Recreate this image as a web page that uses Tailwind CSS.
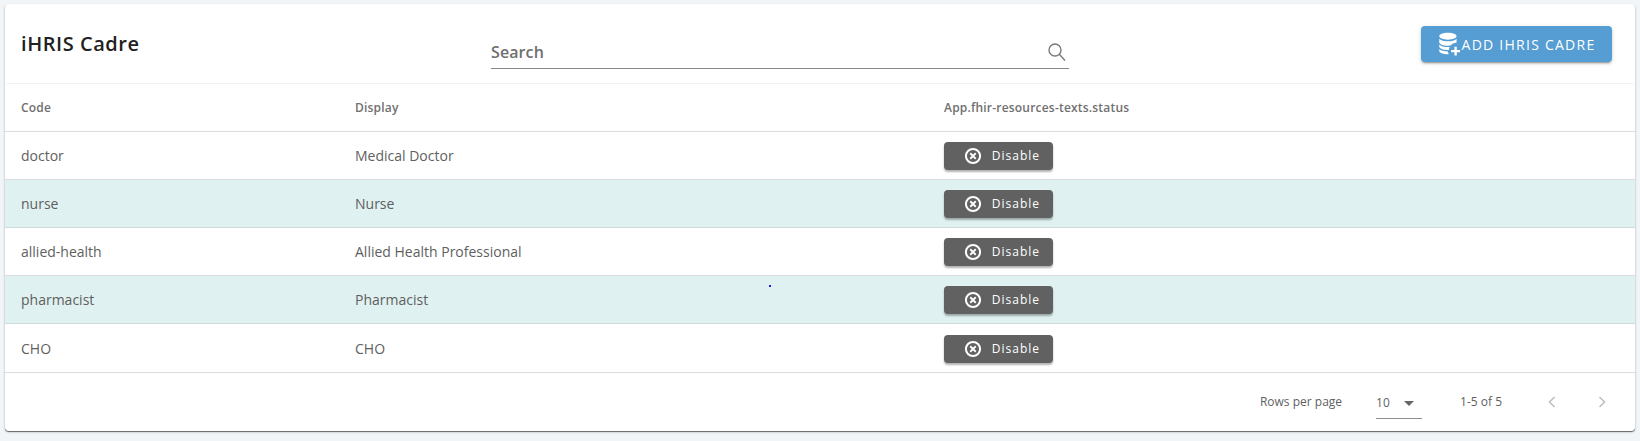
<!DOCTYPE html>
<html><head><meta charset="utf-8"><script src="https://cdn.jsdelivr.net/npm/@tailwindcss/browser@4"></script></head>
<body class="bg-[#f1f5f8] font-['Open_Sans','Noto_Sans',sans-serif] w-[1640px] h-[441px] overflow-hidden">
<div class="pt-1 px-[5px]">
<div class="relative bg-white rounded-[4px] h-[427px] shadow-[0_1px_1px_0_rgba(0,0,0,0.55),0_1px_3px_0_rgba(0,0,0,0.14)]">
  <div class="h-[79px] relative flex items-start">
    <div class="pl-4 pt-[24px] text-[20px] leading-[32px] font-semibold tracking-[0.55px] text-[#212121] w-[486px]">iHRIS Cadre</div>
    <div class="mt-[24px] w-[578px] h-[41px] border-b border-[#8a8a8a] flex items-center justify-between pt-[7px]">
      <span class="text-[16px] font-semibold tracking-[0.1px] text-[#6f6f6f]">Search</span>
      <svg class="w-6 h-6 text-[#7a7a7a]" viewBox="0 0 24 24" fill="none" stroke="currentColor" stroke-width="1.400"><circle cx="10" cy="10" r="6"/><path d="M14.500 14.500l5.500 6"/></svg>
    </div>
    <div class="ml-auto mr-[23px] mt-[22px] w-[191px] h-9 bg-[#559dd2] rounded-[4px] flex items-center justify-center text-white text-[14px] font-medium tracking-[1.25px] shadow-[0_3px_1px_-2px_rgba(0,0,0,0.2),0_2px_2px_0_rgba(0,0,0,0.14),0_1px_5px_0_rgba(0,0,0,0.12)]">
      <svg class="w-[26px] h-[26px] -ml-[2px]" viewBox="0 0 24 24" fill="currentColor"><path d="M11 1.500c4.400 0 8 1.400 8 3.200S15.400 8 11 8 3 6.500 3 4.700 6.600 1.500 11 1.500zM3 7.100C4.600 8.700 7.600 9.500 11 9.500s6.400-.8 8-2.400V10c0 .3-.1.600-.3.900a6.500 6.500 0 0 0-5.400 2.500c-.7.1-1.500.1-2.300.1-4.400 0-8-1.400-8-3.200V7.100zM3 12.400c1.600 1.600 4.600 2.400 8 2.400h1.500a6 6 0 0 0-.5 2.400v.3c-.3 0-.7.100-1 .1-4.400 0-8-1.400-8-3.200v-2zM3 16.900c1.600 1.300 4.400 1.900 8 2 .1.900.4 1.700.8 2.500-.3 0-.5.100-.8.100-4.400 0-8-1.400-8-3.100v-1.500zM17 14.500h2.200v3h3v2.200h-3v3H17v-3h-3v-2.200h3v-3z"/></svg>
      <span>ADD IHRIS CADRE</span>
    </div>
  </div>
  <div class="rounded-t-[4px] border-t border-[#f3f3f3]">
    <div class="grid grid-cols-[350px_589px_1fr] h-[48px] items-center border-b border-[#dcdcdc] text-[12px] font-semibold text-[#707070] tracking-[0.2px]">
      <div class="pl-4">Code</div><div>Display</div><div>App.fhir-resources-texts.status</div>
    </div>
    <div class="grid grid-cols-[350px_589px_1fr] h-[48px] items-center border-b border-[#dcdcdc] text-[14px] text-[#5f5f5f]">
      <div class="pl-4">doctor</div><div>Medical Doctor</div>
      <div><div class="mt-[1px] w-[109px] h-7 bg-[#616161] rounded-[4px] text-white text-[12px] font-medium tracking-[1px] flex items-center justify-end pr-[13px] gap-[9px] shadow-[0_2px_2px_rgba(0,0,0,0.3)]"><svg class="w-5 h-5" viewBox="0 0 24 24" fill="none" stroke="currentColor"><circle cx="12" cy="12" r="8.500" stroke-width="2.400"/><path d="M8.700 8.700l6.600 6.600M15.300 8.700l-6.600 6.600" stroke-width="2.200"/></svg><span>Disable</span></div></div>
    </div>
    <div class="grid grid-cols-[350px_589px_1fr] h-[48px] items-center border-b border-[#cfdcdc] bg-[#dff1f0] text-[14px] text-[#5f5f5f]">
      <div class="pl-4">nurse</div><div>Nurse</div>
      <div><div class="mt-[1px] w-[109px] h-7 bg-[#616161] rounded-[4px] text-white text-[12px] font-medium tracking-[1px] flex items-center justify-end pr-[13px] gap-[9px] shadow-[0_2px_2px_rgba(0,0,0,0.3)]"><svg class="w-5 h-5" viewBox="0 0 24 24" fill="none" stroke="currentColor"><circle cx="12" cy="12" r="8.500" stroke-width="2.400"/><path d="M8.700 8.700l6.600 6.600M15.300 8.700l-6.600 6.600" stroke-width="2.200"/></svg><span>Disable</span></div></div>
    </div>
    <div class="grid grid-cols-[350px_589px_1fr] h-[48px] items-center border-b border-[#dcdcdc] text-[14px] text-[#5f5f5f]">
      <div class="pl-4">allied-health</div><div>Allied Health Professional</div>
      <div><div class="mt-[1px] w-[109px] h-7 bg-[#616161] rounded-[4px] text-white text-[12px] font-medium tracking-[1px] flex items-center justify-end pr-[13px] gap-[9px] shadow-[0_2px_2px_rgba(0,0,0,0.3)]"><svg class="w-5 h-5" viewBox="0 0 24 24" fill="none" stroke="currentColor"><circle cx="12" cy="12" r="8.500" stroke-width="2.400"/><path d="M8.700 8.700l6.600 6.600M15.300 8.700l-6.600 6.600" stroke-width="2.200"/></svg><span>Disable</span></div></div>
    </div>
    <div class="grid grid-cols-[350px_589px_1fr] h-[48px] items-center border-b border-[#cfdcdc] bg-[#dff1f0] text-[14px] text-[#5f5f5f]">
      <div class="pl-4">pharmacist</div><div>Pharmacist</div>
      <div><div class="mt-[1px] w-[109px] h-7 bg-[#616161] rounded-[4px] text-white text-[12px] font-medium tracking-[1px] flex items-center justify-end pr-[13px] gap-[9px] shadow-[0_2px_2px_rgba(0,0,0,0.3)]"><svg class="w-5 h-5" viewBox="0 0 24 24" fill="none" stroke="currentColor"><circle cx="12" cy="12" r="8.500" stroke-width="2.400"/><path d="M8.700 8.700l6.600 6.600M15.300 8.700l-6.600 6.600" stroke-width="2.200"/></svg><span>Disable</span></div></div>
    </div>
    <div class="grid grid-cols-[350px_589px_1fr] h-[49px] items-center border-b border-[#dcdcdc] text-[14px] text-[#5f5f5f]">
      <div class="pl-4">CHO</div><div>CHO</div>
      <div><div class="mt-[1px] w-[109px] h-7 bg-[#616161] rounded-[4px] text-white text-[12px] font-medium tracking-[1px] flex items-center justify-end pr-[13px] gap-[9px] shadow-[0_2px_2px_rgba(0,0,0,0.3)]"><svg class="w-5 h-5" viewBox="0 0 24 24" fill="none" stroke="currentColor"><circle cx="12" cy="12" r="8.500" stroke-width="2.400"/><path d="M8.700 8.700l6.600 6.600M15.300 8.700l-6.600 6.600" stroke-width="2.200"/></svg><span>Disable</span></div></div>
    </div>
    <div class="h-[58px] flex items-start justify-end text-[12px] text-[#5f5f5f] pr-[21px]">
      <span class="mt-[20px]">Rows per page</span>
      <div class="ml-[34px] mt-[6px] w-[46px] h-[40px] border-b border-[#8f8f8f] flex items-center justify-between pt-[9px]"><span>10</span><svg class="w-6 h-6 mr-[1px] text-[#666666]" viewBox="0 0 24 24" fill="currentColor"><path d="M7 10l5 5 5-5z"/></svg></div>
      <span class="ml-[38px] mt-[20px]">1-5 of 5</span>
      <svg class="ml-[38px] mt-[17px] w-6 h-6 text-[#bdbdbd]" viewBox="0 0 24 24" fill="none" stroke="currentColor" stroke-width="1.500"><path d="M14.500 7l-5 5 5 5"/></svg>
      <svg class="ml-[26px] mt-[17px] w-6 h-6 text-[#bdbdbd]" viewBox="0 0 24 24" fill="none" stroke="currentColor" stroke-width="1.500"><path d="M9.500 7l5 5-5 5"/></svg>
    </div>
  </div>
  <div class="absolute left-[764px] top-[281px] w-[2px] h-[2px] bg-[#2020d0]"></div>
</div>
</div>
</body></html>
